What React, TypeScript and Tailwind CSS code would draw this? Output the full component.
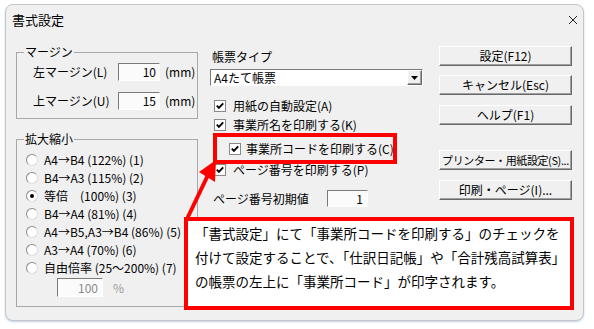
import React from "react";

const sunken =
  "border border-t-[#7a7a7a] border-l-[#7a7a7a] border-r-white border-b-white bg-[#fbfbfb]";
const raised =
  "border border-t-white border-l-white border-r-[#696969] border-b-[#696969] bg-[#f0f0f0] shadow-[inset_-1px_-1px_0_#a0a0a0]";

function CheckBox() {
  return (
    <svg width="12" height="12" viewBox="0 0 12 12" className="shrink-0">
      <rect x="0.5" y="0.5" width="11" height="11" fill="#fff" stroke="#8a8a8a" />
      <path d="M2.8 5.6 L4.9 7.8 L9.2 3.4" stroke="#000" strokeWidth="1.9" fill="none" />
    </svg>
  );
}

function Radio({ on = false }: { on?: boolean }) {
  return (
    <span className="w-[12px] h-[12px] shrink-0 rounded-full border border-t-[#8a8a8a] border-l-[#8a8a8a] border-r-[#dcdcdc] border-b-[#dcdcdc] bg-white flex items-center justify-center">
      {on && <span className="w-[4px] h-[4px] rounded-full bg-black" />}
    </span>
  );
}

const scales = [
  "A4→B4 (122%) (1)",
  "B4→A3 (115%) (2)",
  "等倍　(100%) (3)",
  "B4→A4 (81%) (4)",
  "A4→B5,A3→B4 (86%) (5)",
  "A3→A4 (70%) (6)",
  "自由倍率 (25～200%) (7)",
];

function Button({ label, className = "" }: { label: string; className?: string }) {
  return (
    <div
      className={`${raised} h-[20px] w-[133px] flex items-center justify-center whitespace-nowrap leading-none ${className}`}
    >
      {label}
    </div>
  );
}

export default function App() {
  return (
    <div className="relative w-[594px] h-[329px] overflow-hidden bg-white pt-[4px] pl-[5px] text-black font-['Noto_Sans_CJK_JP','Liberation_Sans',sans-serif]">
      {/* window */}
      <div className="w-[579px] h-[317px] rounded-[8px] border border-[#c6c6c6] bg-[#f0f0f0] shadow-[0_1px_2px_rgba(70,130,200,0.35)] flex flex-col">
        <div className="h-[29px] flex items-center justify-between pl-[6px] pr-[5px]">
          <span className="text-[13px] leading-none">書式設定</span>
          <svg width="10" height="10" viewBox="0 0 10 10">
            <path d="M1 1 L9 9 M9 1 L1 9" stroke="#222" strokeWidth="1" />
          </svg>
        </div>

        <div className="flex pl-[10px] text-[12px]">
          {/* left column */}
          <div className="w-[182px]">
            <fieldset className="mt-[11px] border border-[#a8a8a8] p-0 m-0">
              <legend className="ml-[7px] px-[1px] text-[12px] leading-[14px]">マージン</legend>
              <div className="pl-[16px] pt-[4px] pb-[8px]">
                <div className="flex items-center h-[18px]">
                  <span className="w-[85px]">左マージン(L)</span>
                  <span className={`${sunken} w-[42px] h-[18px] flex items-center justify-end pr-[3px] leading-none`}>10</span>
                  <span className="ml-[5px]">(mm)</span>
                </div>
                <div className="flex items-center h-[18px] mt-[11px]">
                  <span className="w-[85px]">上マージン(U)</span>
                  <span className={`${sunken} w-[42px] h-[18px] flex items-center justify-end pr-[3px] leading-none`}>15</span>
                  <span className="ml-[5px]">(mm)</span>
                </div>
              </div>
            </fieldset>

            <fieldset className="mt-[13px] border border-[#a8a8a8] p-0 m-0">
              <legend className="ml-[7px] px-[1px] text-[12px] leading-[14px]">拡大縮小</legend>
              <div className="pl-[9px] pt-[5px] pb-[9px]">
                {scales.map((s, i) => (
                  <div key={i} className="flex items-center h-[18px]">
                    <Radio on={i === 2} />
                    <span className="ml-[6px] whitespace-nowrap leading-none">{s}</span>
                  </div>
                ))}
                <div className="flex items-center mt-[1px] ml-[31px] h-[19px]">
                  <span className={`${sunken} bg-[#f0f0f0] w-[46px] h-[19px] flex items-center justify-end pr-[4px] text-[#8a8a8a] leading-none`}>100</span>
                  <span className="ml-[10px] text-[#9a9a9a]">%</span>
                </div>
              </div>
            </fieldset>
          </div>

          {/* middle column */}
          <div className="ml-[12px] w-[213px]">
            <div className="mt-[16px] h-[14px] leading-[14px] ml-[2px]">帳票タイプ</div>
            <div className={`${sunken} bg-white mt-[5px] h-[17px] flex items-center justify-between`}>
              <span className="pl-[3px] leading-none">A4たて帳票</span>
              <span className={`${raised} w-[15px] h-[15px] flex items-center justify-center`}>
                <svg width="7" height="4" viewBox="0 0 7 4">
                  <path d="M0 0 H7 L3.5 4 Z" fill="#000" />
                </svg>
              </span>
            </div>
            <div className="mt-[12px] h-[16px] flex items-center ml-[4px]">
              <CheckBox />
              <span className="ml-[7px] leading-none">用紙の自動設定(A)</span>
            </div>
            <div className="mt-[3px] h-[16px] flex items-center ml-[4px]">
              <CheckBox />
              <span className="ml-[7px] leading-none">事業所名を印刷する(K)</span>
            </div>
            <div className="ml-[3px] w-[184px] h-[31px] border-4 border-[#ff0000] flex items-center pl-[12px]">
              <CheckBox />
              <span className="ml-[5px] leading-none whitespace-nowrap">事業所コードを印刷する(C)</span>
            </div>
            <div className="mt-[-2px] h-[16px] flex items-center ml-[4px]">
              <CheckBox />
              <span className="ml-[7px] leading-none">ページ番号を印刷する(P)</span>
            </div>
            <div className="mt-[12px] h-[17px] flex items-center ml-[3px]">
              <span className="w-[114px] leading-none">ページ番号初期値</span>
              <span className={`${sunken} w-[41px] h-[17px] flex items-center justify-end pr-[4px] leading-none`}>1</span>
            </div>
          </div>

          {/* right column */}
          <div className="ml-[16px] w-[133px] flex flex-col">
            <Button label="設定(F12)" className="mt-[12px]" />
            <Button label="キャンセル(Esc)" className="mt-[9px]" />
            <Button label="ヘルプ(F1)" className="mt-[10px]" />
            <Button label="プリンター・用紙設定(S)..." className="mt-[25px] text-[11px] tracking-[-0.4px]" />
            <Button label="印刷・ページ(I)..." className="mt-[10px]" />
          </div>
        </div>
      </div>

      {/* callout */}
      <div className="absolute left-[184px] top-[217px] w-[390px] h-[93px] border-4 border-[#ff0000] bg-white pl-[7px] text-[13.5px] leading-[24px] whitespace-nowrap">
        <div>「書式設定」にて「事業所コードを印刷する」のチェックを</div>
        <div>付けて設定することで、「仕訳日記帳」や「合計残高試算表」</div>
        <div>の帳票の左上に「事業所コード」が印字されます。</div>
      </div>

      {/* arrow */}
      <svg className="absolute left-0 top-0 pointer-events-none" width="594" height="329" viewBox="0 0 594 329">
        <line x1="186" y1="221" x2="208" y2="175" stroke="#ff0000" strokeWidth="4" />
        <polygon points="216,160 199,172 215,182" fill="#ff0000" />
      </svg>
    </div>
  );
}
